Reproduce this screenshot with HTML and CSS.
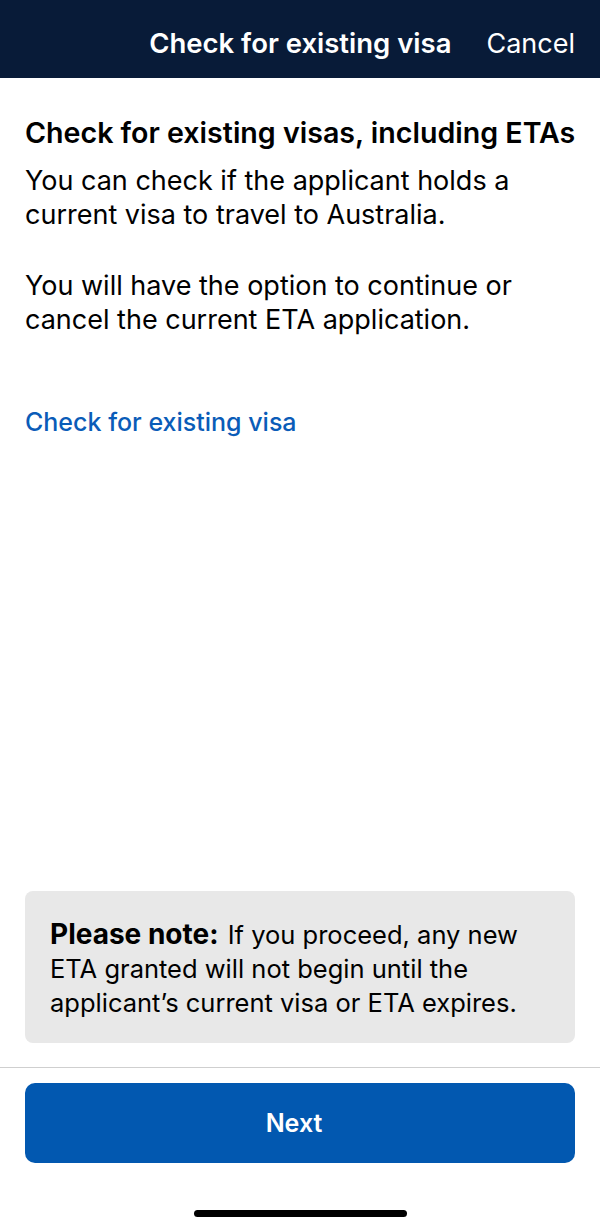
FILE: index.html
```html
<!DOCTYPE html>
<html lang="en">
<head>
  <meta charset="UTF-8" />
  <title>Check for existing visa</title>
  <meta name="viewport" content="width=device-width, initial-scale=1.0" />
  <link rel="stylesheet" href="styles.css">
</head>
<body>

<header class="topbar">
  <div class="topbar-title">Check for existing visa</div>
  <div class="topbar-cancel">Cancel</div>
</header>

<main class="content">
  <h1 class="heading">Check for existing visas, including ETAs</h1>
  <p class="text">You can check if the applicant holds a current visa to travel to Australia.</p>
  <p class="text">You will have the option to continue or cancel the current ETA application.</p>
  <a class="link" href="#">Check for existing visa</a>

  <div class="note">
    <b>Please note:</b> If you proceed, any new ETA granted will not begin until the applicant’s current visa or ETA expires.
  </div>
</main>

<footer class="actions">
  <button class="btn-next">Next</button>
  <div class="home-bar"></div>
</footer>

</body>
</html>
```

FILE: styles.css
```css
body {
  margin: 0;
  padding: 0;
  width: 600px;
  height: 1230px;
  display: flex;
  flex-direction: column;
  font-family: 'Inter', 'Roboto', sans-serif;
  color: #000;
  background: #fff;
  overflow: hidden;
}
.topbar {
  height: 78px;
  background: #081b38;
  color: #fff;
  display: flex;
  align-items: center;
  justify-content: flex-end;
  padding: 8px 25px 0 0;
  gap: 35px;
  box-sizing: border-box;
}
.topbar-title {
  font-size: 27.5px;
  font-weight: 600;
}
.topbar-cancel {
  font-size: 27px;
  font-weight: 400;
}
.content {
  flex: 1;
  display: flex;
  flex-direction: column;
  padding: 0 25px;
}
.heading {
  font-size: 28.6px;
  font-weight: 600;
  margin: 38px 0 0;
  line-height: 34px;
  white-space: nowrap;
}
.text {
  font-size: 27px;
  line-height: 34px;
  margin: 14px 0 0;
}
.text + .text {
  margin-top: 37px;
}
.link {
  color: #0a5cb8;
  font-size: 25px;
  line-height: 30px;
  font-weight: 500;
  text-decoration: none;
  margin-top: 70px;
  align-self: flex-start;
}
.note {
  margin-top: auto;
  margin-bottom: 24px;
  background: #e8e8e8;
  border-radius: 8px;
  padding: 26px 25px 23px;
  font-size: 25.5px;
  line-height: 34px;
}
.note b {
  font-size: 28px;
  font-weight: 700;
  margin-right: 2px;
}
.actions {
  border-top: 1px solid #cfcfcf;
  padding: 15px 25px 0;
  display: flex;
  flex-direction: column;
  align-items: center;
  height: 163px;
  box-sizing: border-box;
}
.btn-next {
  width: 100%;
  height: 80px;
  background: #0258b0;
  color: #fff;
  border: 0;
  border-radius: 10px;
  padding: 0 12px 0 0;
  font-family: inherit;
  font-size: 25px;
  font-weight: 600;
}
.home-bar {
  width: 213px;
  height: 7px;
  border-radius: 4px;
  background: #000;
  margin-top: 47px;
}
```
